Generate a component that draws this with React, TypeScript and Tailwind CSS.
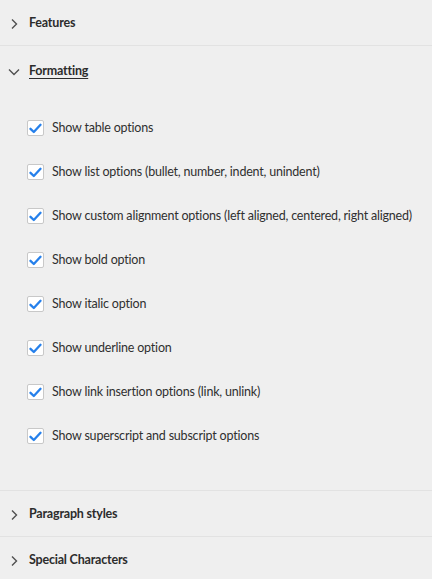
import React from "react";

const options = [
  "Show table options",
  "Show list options (bullet, number, indent, unindent)",
  "Show custom alignment options (left aligned, centered, right aligned)",
  "Show bold option",
  "Show italic option",
  "Show underline option",
  "Show link insertion options (link, unlink)",
  "Show superscript and subscript options",
];

const ChevronRight = () => (
  <svg width="12" height="12" viewBox="0 0 12 12" className="shrink-0">
    <path d="M4 1.5 L8.5 6 L4 10.5" fill="none" stroke="#505050" strokeWidth="1.4" />
  </svg>
);

const ChevronDown = () => (
  <svg width="12" height="12" viewBox="0 0 12 12" className="shrink-0">
    <path d="M1 3.5 L6 8.5 L11 3.5" fill="none" stroke="#505050" strokeWidth="1.4" />
  </svg>
);

const Checkbox = () => (
  <div className="w-[17px] h-[16px] bg-white border border-[#c8c8c8] rounded-[2px] flex items-center justify-center shrink-0">
    <svg width="13" height="11" viewBox="0 0 13 11">
      <path d="M1.5 5.8 L4.8 9 L11.5 1.8" fill="none" stroke="#2680eb" strokeWidth="2.3" strokeLinecap="round" strokeLinejoin="round" />
    </svg>
  </div>
);

const Header = ({ title, open, tall }: { title: string; open?: boolean; tall?: boolean }) => (
  <div className={(tall ? "h-[48px] pt-[3px] " : "h-[45px] pt-[2px] ") + "flex items-center gap-[9px] pl-[8px]"}>
    {open ? <ChevronDown /> : <ChevronRight />}
    <span
      className={
        "text-[12.5px] tracking-[-0.2px] font-bold text-[#2c2c2c] " +
        (open ? "underline underline-offset-[3px]" : "")
      }
    >
      {title}
    </span>
  </div>
);

export default function App() {
  return (
    <div
      className="w-[432px] h-[579px] bg-[#efefef] overflow-hidden"
      style={{ fontFamily: "Lato, 'Open Sans', sans-serif" }}
    >
      <div className="border-b border-[#e2e2e2]">
        <Header title="Features" />
      </div>
      <div className="border-b border-[#e2e2e2]">
        <Header title="Formatting" open tall />
        <div className="flex flex-col gap-[28px] pl-[27px] pt-[26px] pb-[46px]">
          {options.map((o) => (
            <div key={o} className="h-[16px] flex items-center gap-[8px]">
              <Checkbox />
              <span className="text-[12.5px] tracking-[-0.2px] text-[#303030] whitespace-nowrap">{o}</span>
            </div>
          ))}
        </div>
      </div>
      <div className="border-b border-[#e2e2e2]">
        <Header title="Paragraph styles" />
      </div>
      <Header title="Special Characters" />
    </div>
  );
}
